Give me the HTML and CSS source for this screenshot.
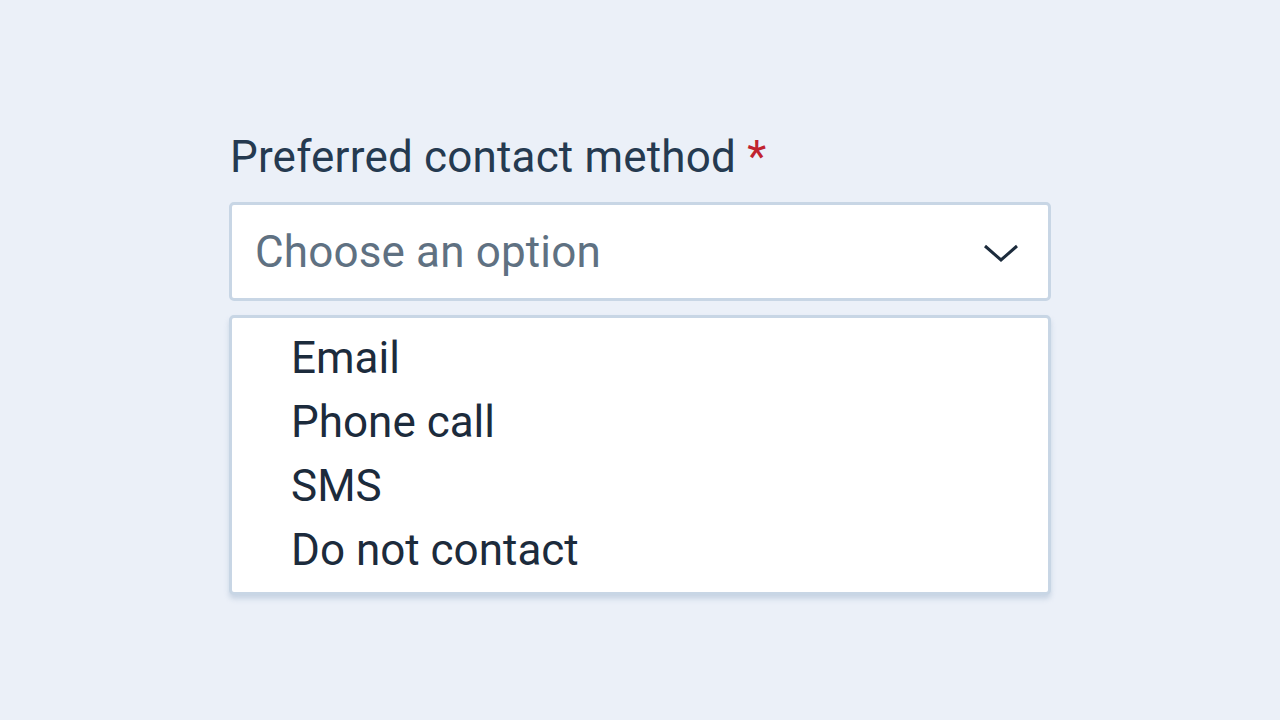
FILE: index.html
```html
<!DOCTYPE html>
<html>
<head>
<meta charset="utf-8">
<link rel="stylesheet" href="styles.css">
</head>
<body>
<div class="field">
  <label class="label">Preferred contact method <span class="req">*</span></label>
  <div class="select">
    <span class="placeholder">Choose an option</span>
    <svg class="chev" width="36" height="20" viewBox="0 0 36 20"><path d="M2 3 L18 17 L34 3" fill="none" stroke="#1c2b3c" stroke-width="3"/></svg>
  </div>
  <ul class="menu">
    <li>Email</li>
    <li>Phone call</li>
    <li>SMS</li>
    <li>Do not contact</li>
  </ul>
</div>
</body>
</html>
```
FILE: styles.css
```css
html, body { margin: 0; padding: 0; }
body {
  background: #ebf0f8;
  font-family: Roboto, "Liberation Sans", sans-serif;
  width: 1280px;
  height: 720px;
}
.field {
  margin-left: 229px;
  padding-top: 131px;
  width: 822px;
}
.label {
  display: block;
  font-size: 44px;
  letter-spacing: 0.18px;
  line-height: 52px;
  color: #253a50;
  padding-left: 1px;
}
.req { color: #c0232f; }
.select {
  margin-top: 19px;
  box-sizing: border-box;
  height: 99px;
  background: #fff;
  border: 3px solid #c8d6e5;
  border-radius: 5px;
  display: flex;
  align-items: center;
  justify-content: space-between;
  padding: 0 29px 0 23px;
}
.placeholder {
  font-size: 44px;
  letter-spacing: 0.15px;
  color: #5f7182;
}
.chev { display: block; margin-top: 2px; }
.menu {
  list-style: none;
  margin: 14px 0 0 0;
  padding: 8px 0 10px 59px;
  background: #fff;
  border: 3px solid #c8d6e5;
  border-radius: 5px;
  box-shadow: 0 4px 5px rgba(160, 180, 205, 0.45);
}
.menu li {
  font-size: 44px;
  line-height: 64px;
  color: #1c2b3c;
}
```
